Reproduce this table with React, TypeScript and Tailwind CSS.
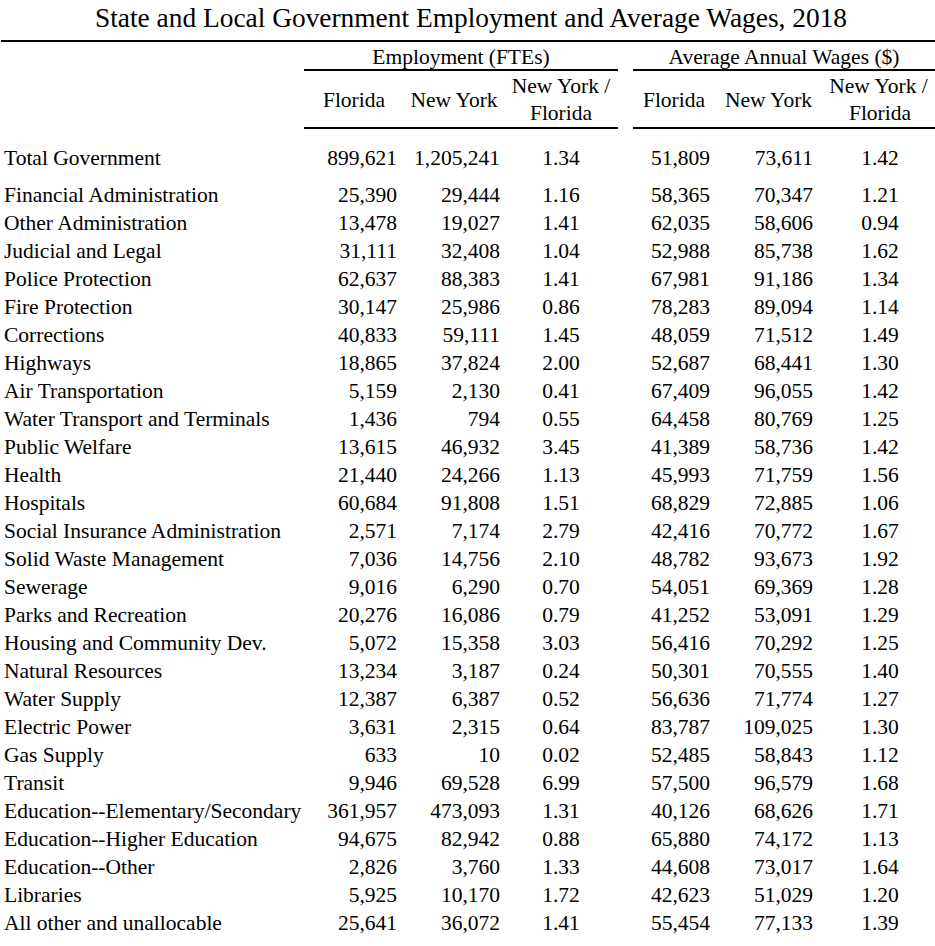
const rows: [string, string, string, string, string, string, string][] = [
  ['Financial Administration', '25,390', '29,444', '1.16', '58,365', '70,347', '1.21'],
  ['Other Administration', '13,478', '19,027', '1.41', '62,035', '58,606', '0.94'],
  ['Judicial and Legal', '31,111', '32,408', '1.04', '52,988', '85,738', '1.62'],
  ['Police Protection', '62,637', '88,383', '1.41', '67,981', '91,186', '1.34'],
  ['Fire Protection', '30,147', '25,986', '0.86', '78,283', '89,094', '1.14'],
  ['Corrections', '40,833', '59,111', '1.45', '48,059', '71,512', '1.49'],
  ['Highways', '18,865', '37,824', '2.00', '52,687', '68,441', '1.30'],
  ['Air Transportation', '5,159', '2,130', '0.41', '67,409', '96,055', '1.42'],
  ['Water Transport and Terminals', '1,436', '794', '0.55', '64,458', '80,769', '1.25'],
  ['Public Welfare', '13,615', '46,932', '3.45', '41,389', '58,736', '1.42'],
  ['Health', '21,440', '24,266', '1.13', '45,993', '71,759', '1.56'],
  ['Hospitals', '60,684', '91,808', '1.51', '68,829', '72,885', '1.06'],
  ['Social Insurance Administration', '2,571', '7,174', '2.79', '42,416', '70,772', '1.67'],
  ['Solid Waste Management', '7,036', '14,756', '2.10', '48,782', '93,673', '1.92'],
  ['Sewerage', '9,016', '6,290', '0.70', '54,051', '69,369', '1.28'],
  ['Parks and Recreation', '20,276', '16,086', '0.79', '41,252', '53,091', '1.29'],
  ['Housing and Community Dev.', '5,072', '15,358', '3.03', '56,416', '70,292', '1.25'],
  ['Natural Resources', '13,234', '3,187', '0.24', '50,301', '70,555', '1.40'],
  ['Water Supply', '12,387', '6,387', '0.52', '56,636', '71,774', '1.27'],
  ['Electric Power', '3,631', '2,315', '0.64', '83,787', '109,025', '1.30'],
  ['Gas Supply', '633', '10', '0.02', '52,485', '58,843', '1.12'],
  ['Transit', '9,946', '69,528', '6.99', '57,500', '96,579', '1.68'],
  ['Education--Elementary/Secondary', '361,957', '473,093', '1.31', '40,126', '68,626', '1.71'],
  ['Education--Higher Education', '94,675', '82,942', '0.88', '65,880', '74,172', '1.13'],
  ['Education--Other', '2,826', '3,760', '1.33', '44,608', '73,017', '1.64'],
  ['Libraries', '5,925', '10,170', '1.72', '42,623', '51,029', '1.20'],
  ['All other and unallocable', '25,641', '36,072', '1.41', '55,454', '77,133', '1.39'],
]

const cols = 'grid grid-cols-[304px_100px_100px_114px_15px_82px_107px_113px]'

function DataRow({ r }: { r: [string, string, string, string, string, string, string] }) {
  return (
    <div className={`${cols} leading-[28px]`}>
      <div className="pl-[4px] whitespace-nowrap">{r[0]}</div>
      <div className="text-right pr-[7px]">{r[1]}</div>
      <div className="text-right pr-[4px]">{r[2]}</div>
      <div className="text-center">{r[3]}</div>
      <div />
      <div className="text-right pr-[5px]">{r[4]}</div>
      <div className="text-right pr-[9px]">{r[5]}</div>
      <div className="text-center pl-[3px]">{r[6]}</div>
    </div>
  )
}

export default function App() {
  return (
    <div className="w-[935px] h-[946px] bg-white text-black font-['Liberation_Serif',serif] text-[21.5px] overflow-hidden">
      {/* Title */}
      <div className="text-center text-[27.4px] leading-[36px] pb-[4px] pl-[7px] whitespace-nowrap">
        State and Local Government Employment and Average Wages, 2018
      </div>
      <div className="ml-[1px] h-[2px] bg-black" />

      {/* Group headers */}
      <div className={`${cols} leading-[24px]`}>
        <div />
        <div className="col-span-3 text-center pt-[3px] border-b-2 border-black whitespace-nowrap">
          Employment (FTEs)
        </div>
        <div />
        <div className="col-span-3 text-center pt-[3px] border-b-2 border-black whitespace-nowrap">
          Average Annual Wages ($)
        </div>
      </div>

      {/* Column headers */}
      <div className={`${cols} leading-[27px] h-[57px]`}>
        <div />
        <div className="flex items-center justify-center pt-[3px] border-b-2 border-black">Florida</div>
        <div className="flex items-center justify-center pt-[3px] border-b-2 border-black whitespace-nowrap">New York</div>
        <div className="flex flex-col items-center justify-center pt-[2px] border-b-2 border-black whitespace-nowrap">
          <span>New York /</span>
          <span>Florida</span>
        </div>
        <div />
        <div className="flex items-center justify-center pt-[3px] border-b-2 border-black">Florida</div>
        <div className="flex items-center justify-center pt-[3px] border-b-2 border-black whitespace-nowrap">New York</div>
        <div className="flex flex-col items-center justify-center pt-[2px] border-b-2 border-black whitespace-nowrap">
          <span>New York /</span>
          <span className="pl-[3px]">Florida</span>
        </div>
      </div>

      {/* Total */}
      <div className="pt-[16px] pb-[9px]">
        <DataRow r={['Total Government', '899,621', '1,205,241', '1.34', '51,809', '73,611', '1.42']} />
      </div>

      {rows.map((r) => (
        <DataRow key={r[0]} r={r} />
      ))}
    </div>
  )
}
